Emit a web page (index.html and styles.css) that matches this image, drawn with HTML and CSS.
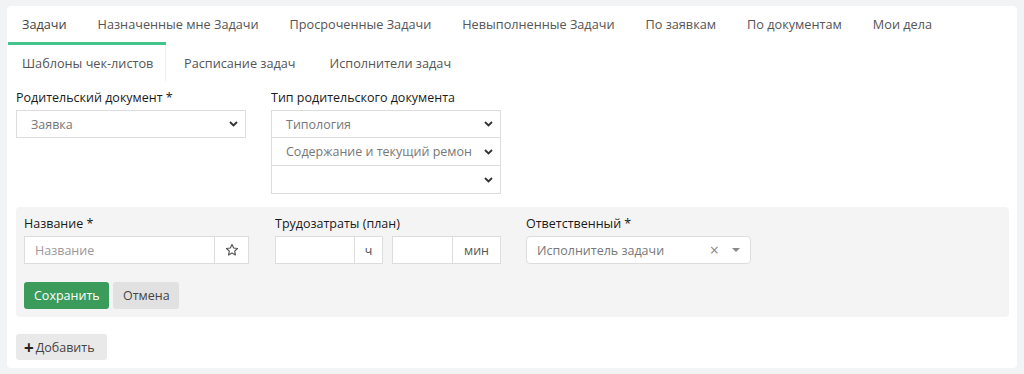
FILE: index.html
```html
<!DOCTYPE html>
<html lang="ru">
<head>
    <meta charset="UTF-8">
    <title>Задачи</title>
    <link rel="stylesheet" href="styles.css">
</head>
<body>
    <div class="card">
        <!-- Вкладки -->
        <ul class="tabs">
            <li class="tab active">Задачи</li>
            <li class="tab">Назначенные мне Задачи</li>
            <li class="tab">Просроченные Задачи</li>
            <li class="tab">Невыполненные Задачи</li>
            <li class="tab">По заявкам</li>
            <li class="tab">По документам</li>
            <li class="tab">Мои дела</li>
        </ul>
        <div class="tab-indicator"></div>
        <ul class="tabs tabs-second">
            <li class="tab boxed">Шаблоны чек-листов</li>
            <li class="tab">Расписание задач</li>
            <li class="tab">Исполнители задач</li>
        </ul>

        <div class="content">
            <!-- Родительский документ -->
            <div class="doc-row">
                <div class="field">
                    <label>Родительский документ *</label>
                    <div class="select">
                        <span>Заявка</span>
                        <svg class="chev" width="9" height="6" viewBox="0 0 9 6"><path d="M1 1l3.5 3.5L8 1" fill="none" stroke="#333" stroke-width="1.8"/></svg>
                    </div>
                </div>
                <div class="field">
                    <label>Тип родительского документа</label>
                    <div class="select-stack">
                        <div class="select">
                            <span>Типология</span>
                            <svg class="chev" width="9" height="6" viewBox="0 0 9 6"><path d="M1 1l3.5 3.5L8 1" fill="none" stroke="#333" stroke-width="1.8"/></svg>
                        </div>
                        <div class="select">
                            <span>Содержание и текущий ремон</span>
                            <svg class="chev" width="9" height="6" viewBox="0 0 9 6"><path d="M1 1l3.5 3.5L8 1" fill="none" stroke="#333" stroke-width="1.8"/></svg>
                        </div>
                        <div class="select">
                            <span></span>
                            <svg class="chev" width="9" height="6" viewBox="0 0 9 6"><path d="M1 1l3.5 3.5L8 1" fill="none" stroke="#333" stroke-width="1.8"/></svg>
                        </div>
                    </div>
                </div>
            </div>

            <!-- Форма новой задачи -->
            <div class="panel">
                <div class="panel-row">
                    <div class="field f-name">
                        <label>Название *</label>
                        <div class="input-group">
                            <div class="input placeholder grow">Название</div>
                            <div class="addon star">
                                <svg width="14" height="14" viewBox="0 0 24 24"><path d="M12 2.5l2.9 6.1 6.6.8-4.9 4.6 1.3 6.6L12 17.3l-5.9 3.3 1.3-6.6-4.9-4.6 6.6-.8z" fill="none" stroke="#555" stroke-width="2" stroke-linejoin="round"/></svg>
                            </div>
                        </div>
                    </div>
                    <div class="field f-time">
                        <label>Трудозатраты (план)</label>
                        <div class="time-row">
                            <div class="input-group">
                                <div class="input hours"></div>
                                <div class="addon h">ч</div>
                            </div>
                            <div class="input-group">
                                <div class="input mins"></div>
                                <div class="addon m">мин</div>
                            </div>
                        </div>
                    </div>
                    <div class="field f-resp">
                        <label>Ответственный *</label>
                        <div class="combo">
                            <span>Исполнитель задачи</span>
                            <span class="clear">×</span>
                            <span class="caret"></span>
                        </div>
                    </div>
                </div>
                <div class="buttons">
                    <button class="btn btn-green">Сохранить</button>
                    <button class="btn btn-gray">Отмена</button>
                </div>
            </div>

            <button class="btn btn-add"><b>+</b>Добавить</button>
        </div>
    </div>
</body>
</html>
```

FILE: styles.css
```css
/* Основа страницы */
body {
    margin: 0;
    padding: 6px 7px;
    background-color: #f2f3f5;
    font-family: "Open Sans", Arial, sans-serif;
    font-size: 12.5px;
    color: #222;
}
/* Белая карточка */
.card {
    background-color: #fff;
    border-radius: 4px;
    padding-bottom: 8px;
}
/* Вкладки */
.tabs {
    display: flex;
    list-style: none;
    margin: 0;
    padding: 0;
    height: 36px;
    font-size: 12.7px;
}
.tab {
    padding: 0 16px 0 15px;
    line-height: 37px;
    color: #555;
    white-space: nowrap;
}
.tab.active {
    color: #444;
}
.tab-indicator {
    width: 158px;
    height: 3px;
    margin-left: 1px;
    background-color: #44c48a;
}
.tab.boxed {
    width: 127px;
    border-right: 1px solid #eee;
}
.tabs-second .tab + .tab {
    padding-left: 18px;
}
/* Содержимое */
.content {
    padding: 8px 8px 0 9px;
}
.doc-row {
    display: flex;
    gap: 25px;
}
.field label {
    display: block;
    font-weight: 500;
    line-height: 18px;
    margin-bottom: 3px;
    color: #1a1a1a;
}
.select {
    width: 230px;
    height: 28px;
    box-sizing: border-box;
    border: 1px solid #ddd;
    display: flex;
    align-items: center;
    justify-content: space-between;
    padding: 0 7px 0 14px;
    color: #777;
}
.select-stack .select + .select {
    border-top: none;
}
/* Серая панель */
.panel {
    margin-top: 13px;
    background-color: #f4f4f4;
    border-radius: 4px;
    padding: 8px;
}
.panel-row {
    display: flex;
    gap: 26px;
}
.f-resp {
    margin-left: -1px;
}
.input-group {
    display: flex;
    height: 28px;
}
.input, .addon {
    box-sizing: border-box;
    height: 28px;
    background-color: #fff;
    border: 1px solid #ddd;
    display: flex;
    align-items: center;
}
.input {
    padding: 0 10px;
}
.placeholder {
    color: #999;
}
.grow {
    width: 191px;
}
.addon {
    border-left: none;
    justify-content: center;
    color: #555;
}
.star {
    width: 34px;
}
.time-row {
    display: flex;
    gap: 9px;
}
.hours { width: 80px; }
.addon.h { width: 28px; }
.mins { width: 61px; }
.addon.m { width: 48px; }
.combo {
    width: 225px;
    height: 28px;
    box-sizing: border-box;
    background-color: #fff;
    border: 1px solid #ddd;
    border-radius: 4px;
    display: flex;
    align-items: center;
    padding: 0 10px;
    color: #777;
}
.combo span:first-child {
    flex: 1;
}
.clear {
    color: #888;
    font-size: 16px;
    margin-right: 13px;
}
.caret {
    width: 0;
    height: 0;
    border-left: 4px solid transparent;
    border-right: 4px solid transparent;
    border-top: 4px solid #888;
}
/* Кнопки */
.buttons {
    margin-top: 18px;
    display: flex;
    gap: 4px;
}
.btn {
    font-family: inherit;
    font-size: 12.5px;
    border: none;
    border-radius: 3px;
    height: 27px;
    padding: 0 10px;
    cursor: pointer;
}
.btn-green {
    background-color: #3a9b5b;
    color: #fff;
    width: 85px;
}
.btn-gray {
    background-color: #e1e1e1;
    color: #444;
    width: 66px;
}
.btn-add {
    margin-top: 17px;
    height: 26px;
    width: 91px;
    padding: 0 8px;
    background-color: #e9e9e9;
    color: #444;
    display: flex;
    align-items: center;
}
.btn-add b {
    font-size: 17px;
    color: #222;
    margin-right: 2px;
}
```
